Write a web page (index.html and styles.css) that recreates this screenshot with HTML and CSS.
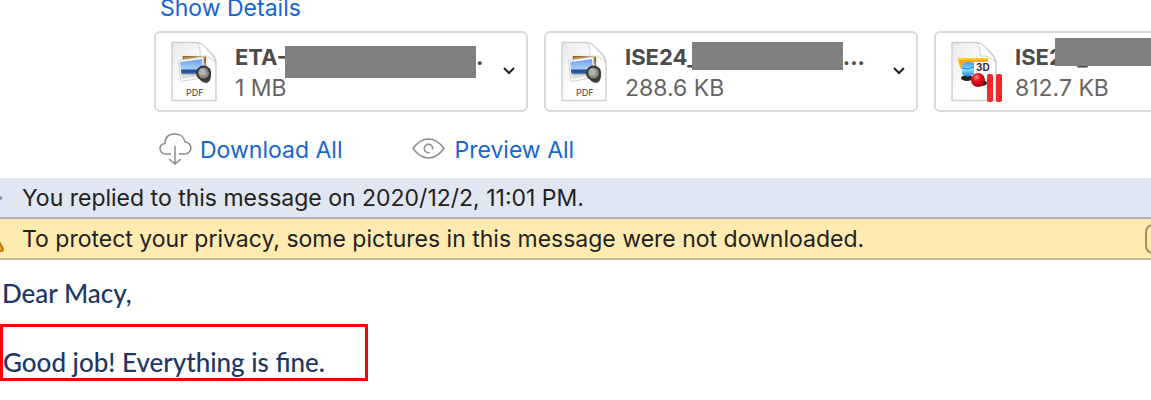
FILE: index.html
```html
<!DOCTYPE html>
<html lang="en">
<head>
    <meta charset="UTF-8">
    <meta name="viewport" content="width=device-width, initial-scale=1.0">
    <title>Message</title>
    <link rel="stylesheet" href="styles.css">
</head>
<body>
    <svg class="defs" aria-hidden="true">
        <defs>
            <linearGradient id="paper" x1="0" y1="0" x2="1" y2="1">
                <stop offset="0" stop-color="#e9e9e9"/>
                <stop offset="0.5" stop-color="#fdfdfd"/>
                <stop offset="1" stop-color="#ffffff"/>
            </linearGradient>
            <linearGradient id="sky" x1="0" y1="0" x2="0" y2="1">
                <stop offset="0" stop-color="#6f9fee"/>
                <stop offset="0.5" stop-color="#a9d0f8"/>
                <stop offset="0.55" stop-color="#20498f"/>
                <stop offset="0.7" stop-color="#2c62a8"/>
                <stop offset="0.8" stop-color="#e2dccb"/>
                <stop offset="1" stop-color="#cfe0ec"/>
            </linearGradient>
            <linearGradient id="cube" x1="0" y1="0" x2="0" y2="1">
                <stop offset="0" stop-color="#2b9df0"/>
                <stop offset="0.5" stop-color="#8fe0ff"/>
                <stop offset="1" stop-color="#1377e0"/>
            </linearGradient>
            <radialGradient id="ball" cx="0.4" cy="0.3" r="0.7">
                <stop offset="0" stop-color="#ff8a8a"/>
                <stop offset="0.4" stop-color="#e8141c"/>
                <stop offset="1" stop-color="#a00008"/>
            </radialGradient>
            <symbol id="page" viewBox="0 0 52 62">
                <path d="M2 1.500H26Q31 1.500 35 6L42 13Q46 17 46 23V59.500H2Z" fill="url(#paper)" stroke="#cfcfcf" stroke-width="1.500"/>
                <path d="M27 2Q31 7 30 15Q40 14 46 22Q45 17 41 13L34 5Q31 2 27 2Z" fill="#fff" stroke="#d0d0d0"/>
            </symbol>
            <symbol id="pdf" viewBox="0 0 52 62">
                <use href="#page" width="52" height="62"/>
                <path d="M12 14L37 15L36 33L12 32Z" fill="#8a6430" stroke="#f2eee2" stroke-width="1.500"/>
                <path d="M14 17L35 17" stroke="#b88b45" stroke-width="2"/>
                <path d="M8.500 19.500L33 16L36 36L11 40.500Z" fill="#fff" stroke="#d2d2d2"/>
                <path d="M10 21L32 18L34 34L12 38Z" fill="url(#sky)"/>
                <path d="M27 33Q30 42 37 42Q43 40 40 27Z" fill="#453e35"/>
                <circle cx="33.500" cy="32" r="6.500" fill="#81868b" stroke="#39352f" stroke-width="2"/>
                <circle cx="32.500" cy="31" r="3.500" fill="#a9b3ba"/>
                <path d="M30 34Q33 36 37 33" fill="none" stroke="#b79568" stroke-width="1.500"/>
            </symbol>
            <symbol id="model" viewBox="0 0 52 62">
                <use href="#page" width="52" height="62"/>
                <path d="M8 17H38V21H24L13 30Q9 27 8 17Z" fill="#f9ad13"/>
                <path d="M9 18H37" stroke="#ffcb3b" stroke-width="2"/>
                <ellipse cx="17" cy="37" rx="6" ry="3" fill="#222"/>
                <ellipse cx="32" cy="42" rx="5" ry="3" fill="#222"/>
                <path d="M12 24L17 21L24 22V33L18 36L12 33Z" fill="url(#cube)"/>
                <path d="M12 27L18 28L24 26" fill="none" stroke="#1b7fe0"/>
                <circle cx="28" cy="39" r="7" fill="url(#ball)"/>
                <rect x="37" y="33" width="6" height="28" rx="2" fill="#ee2b24"/>
                <rect x="46" y="33" width="6" height="28" rx="2" fill="#ee2b24"/>
            </symbol>
        </defs>
    </svg>

    <header class="header">
        <a class="details" href="#">Show Details</a>

        <div class="attachments">
            <div class="card">
                <svg class="file-icon" viewBox="0 0 52 62" aria-hidden="true">
                    <use href="#pdf"/>
                    <text class="file-type" x="16" y="55">PDF</text>
                </svg>
                <div class="file">
                    <div class="name">ETA-<span class="mask mask-wide"></span>.</div>
                    <div class="size">1 MB</div>
                </div>
                <button class="more" aria-label="More"><svg width="14" height="10" viewBox="0 0 14 10"><path d="M2 2L7 7L12 2"/></svg></button>
            </div>
            <div class="card">
                <svg class="file-icon" viewBox="0 0 52 62" aria-hidden="true">
                    <use href="#pdf"/>
                    <text class="file-type" x="16" y="55">PDF</text>
                </svg>
                <div class="file">
                    <div class="name">ISE24_<span class="mask mask-mid"></span>...</div>
                    <div class="size">288.6 KB</div>
                </div>
                <button class="more" aria-label="More"><svg width="14" height="10" viewBox="0 0 14 10"><path d="M2 2L7 7L12 2"/></svg></button>
            </div>
            <div class="card">
                <svg class="file-icon" viewBox="0 0 52 62" aria-hidden="true">
                    <use href="#model"/>
                    <text class="file-label" x="26" y="30">3D</text>
                </svg>
                <div class="file">
                    <div class="name">ISE24_<span class="mask mask-over"></span></div>
                    <div class="size">812.7 KB</div>
                </div>
                <button class="more" aria-label="More"><svg width="14" height="10" viewBox="0 0 14 10"><path d="M2 2L7 7L12 2"/></svg></button>
            </div>
        </div>

        <div class="actions">
            <a class="action" href="#">
                <svg width="34" height="34" viewBox="0 0 34 34" aria-hidden="true">
                    <path d="M13 21H8C4 21 2 18 2 15.500C2 13 4 11 7 10.500C7 4 11 1 17 1C22 1 26 4 27 9C30 9 33 12 33 15C33 18 30 21 27 21H21"/>
                    <path d="M17 13V31M11 26L17 31L23 26"/>
                </svg>
                Download All
            </a>
            <a class="action" href="#">
                <svg width="34" height="34" viewBox="0 0 34 34" aria-hidden="true">
                    <path d="M1 15.500Q8 6 16.500 6Q25 6 32 15.500Q25 25 16.500 25Q8 25 1 15.500Z"/>
                    <path d="M17.500 19.500A4.200 4.200 0 1 1 20.500 16.500"/>
                </svg>
                Preview All
            </a>
        </div>
    </header>

    <div class="banner replied">
        <svg class="banner-icon" width="18" height="30" viewBox="0 0 18 30" aria-hidden="true"><path d="M2 15H16" stroke="#8b8b8b" stroke-width="3"/></svg>
        <span>You replied to this message on 2020/12/2, 11:01 PM.</span>
    </div>
    <div class="banner privacy">
        <svg class="banner-icon" width="18" height="30" viewBox="0 0 18 30" aria-hidden="true"><path d="M7 6L17 25Q17 27 15 27H0Z" fill="#f6ae16" stroke="#b9770f" stroke-width="2"/></svg>
        <span>To protect your privacy, some pictures in this message were not downloaded.</span>
        <button class="load" aria-label="Download pictures"></button>
    </div>

    <main class="message">
        <p class="greeting">Dear Macy,</p>
        <p class="highlight">Good job! Everything is fine.</p>
    </main>
</body>
</html>
```
FILE: styles.css
```css
* {
    box-sizing: border-box;
}
body {
    margin: 0;
    background: #fff;
    font-family: Inter, 'Liberation Sans', sans-serif;
    font-size: 23px;
    overflow-x: hidden;
}
a {
    color: #1566d2;
    text-decoration: none;
}
.defs {
    position: absolute;
    width: 0;
    height: 0;
}
.header {
    padding-left: 154px;
    overflow: hidden;
}
.details {
    display: block;
    padding-left: 6px;
    line-height: 16px;
}
.attachments {
    display: flex;
    gap: 16px;
    margin-top: 15px;
}
.card {
    flex: 0 0 374px;
    height: 81px;
    display: flex;
    align-items: center;
    padding: 0 10px 0 14px;
    border: 2px solid #dcd8d7;
    border-radius: 6px;
}
.file-icon {
    flex: none;
    width: 52px;
    height: 62px;
}
.file-type {
    font-size: 9px;
    fill: #444;
}
.file-label {
    font-size: 10px;
    font-weight: 700;
    fill: #333;
}
.file {
    flex: 1;
    margin-left: 13px;
    padding-top: 2px;
    line-height: 31px;
    color: #666462;
}
.name {
    position: relative;
    display: flex;
    height: 31px;
    color: #4d4b48;
    font-size: 22px;
    font-weight: 700;
}
.mask {
    background: #808080;
}
.mask-wide {
    width: 191px;
    height: 32px;
    margin: 4px 0 0 -2px;
}
.mask-mid {
    width: 151px;
    height: 28px;
    margin-left: -6px;
}
.mask-over {
    position: absolute;
    left: 40px;
    top: -4px;
    width: 220px;
    height: 28px;
}
.more {
    padding: 0;
    border: none;
    background: none;
    line-height: 10px;
}
.more svg {
    fill: none;
    stroke: #222;
    stroke-width: 2;
}
.actions {
    display: flex;
    gap: 70px;
    padding: 21px 0 11px 4px;
}
.action {
    display: flex;
    align-items: center;
    gap: 8px;
    line-height: 34px;
}
.action svg {
    fill: none;
    stroke: #8c8c8c;
    stroke-width: 1.5;
}
.banner {
    display: flex;
    align-items: center;
    height: 41px;
    color: #222;
    border-bottom: 2px solid #b3b1ae;
    overflow: hidden;
    white-space: nowrap;
}
.banner-icon {
    flex: none;
    margin-left: -14px;
    margin-right: 18px;
}
.replied {
    background: #e0e6f2;
}
.privacy {
    background: #ffeab0;
    border-color: #c4b79c;
}
.load {
    flex: none;
    width: 120px;
    height: 30px;
    margin-left: auto;
    margin-right: -114px;
    border: 2px solid #9c8f6b;
    border-radius: 8px;
    background: none;
}
.message {
    color: #1d3766;
    font-family: Lato, 'Open Sans', sans-serif;
    font-size: 26px;
    font-weight: 500;
    line-height: 32px;
}
.message p {
    margin: 0;
}
.greeting {
    padding: 17px 2px 15px;
}
.highlight {
    width: fit-content;
    padding: 19px 40px 0 0;
    border: 3px solid #f00;
}
```
